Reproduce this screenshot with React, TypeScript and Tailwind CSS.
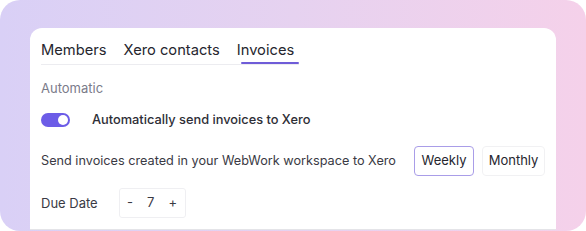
import React from "react";

export default function App() {
  return (
    <div className="w-[586px] h-[231px] bg-white" style={{ fontFamily: "Inter, 'Noto Sans', sans-serif" }}>
      <div className="w-[586px] h-[231px] rounded-[20px] bg-gradient-to-r from-[#d9d0f6] via-[#e6d2f0] to-[#f5d1ea] pt-[28px] px-[30px] overflow-hidden">
        <div className="bg-white rounded-t-[12px] h-[202px] border-b border-[#e4e4e8] pl-[11px] pr-[10px] whitespace-nowrap">
          <div className="inline-flex items-end gap-[17px] pt-[12px] border-b border-[#ececf0]">
            <div className="text-[14.7px] leading-[20px] text-[#26262e] pb-[4px]">Members</div>
            <div className="text-[14.7px] leading-[20px] text-[#26262e] pb-[4px]">Xero contacts</div>
            <div className="flex flex-col">
              <div className="text-[14.7px] leading-[20px] text-[#26262e] pb-[2px]">Invoices</div>
              <div className="ml-[4px] h-[2px] w-[58px] bg-[#6f5cd8] rounded-full"></div>
            </div>
          </div>
          <div className="mt-[14px] text-[13px] leading-[18px] text-[#7b7b8a]">Automatic</div>
          <div className="mt-[14px] flex items-center">
            <div className="w-[29px] h-[14px] rounded-full bg-[#6c5ce7] flex items-center justify-end pr-[2px]">
              <div className="w-[10px] h-[10px] rounded-full bg-white"></div>
            </div>
            <div className="ml-[22px] text-[12.8px] leading-[18px] text-[#2e2e36] font-medium">Automatically send invoices to Xero</div>
          </div>
          <div className="mt-[17px] flex items-center">
            <div className="text-[12.7px] leading-[18px] text-[#3a3a44] w-[373px]">Send invoices created in your WebWork workspace to Xero</div>
            <div className="flex gap-[8px]">
              <div className="w-[60px] h-[30px] rounded-[4px] border border-[#a99de8] flex items-center justify-center text-[13px] text-[#26262e]">Weekly</div>
              <div className="w-[63px] h-[30px] rounded-[4px] border border-[#f1f1f3] flex items-center justify-center text-[13px] text-[#26262e]">Monthly</div>
            </div>
          </div>
          <div className="mt-[12px] flex items-center">
            <div className="text-[13px] leading-[18px] text-[#3a3a44] w-[78px]">Due Date</div>
            <div className="w-[67px] h-[30px] rounded-[3px] border border-[#efeff2] flex items-center justify-between pl-[7px] pr-[8px] text-[13px] text-[#3a3a44]">
              <span>-</span>
              <span>7</span>
              <span>+</span>
            </div>
          </div>
        </div>
      </div>
    </div>
  );
}
